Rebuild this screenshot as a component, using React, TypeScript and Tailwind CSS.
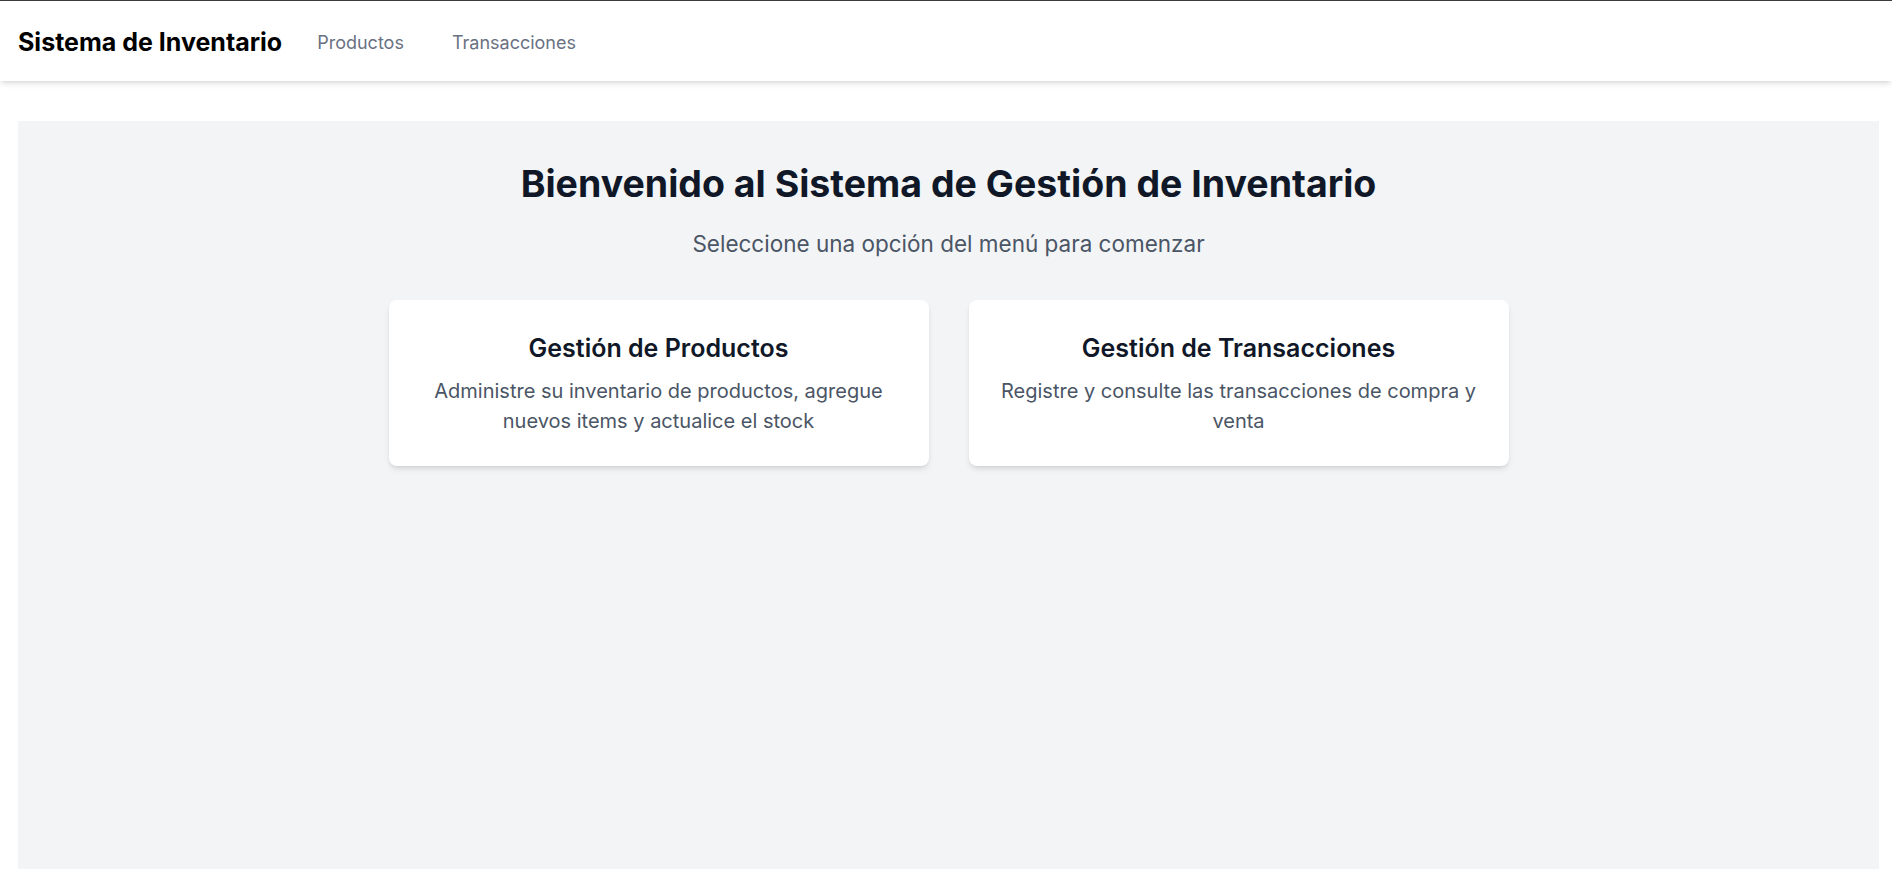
import React from 'react';

const cards = [
  {
    title: 'Gestión de Productos',
    text: 'Administre su inventario de productos, agregue nuevos items y actualice el stock',
  },
  {
    title: 'Gestión de Transacciones',
    text: 'Registre y consulte las transacciones de compra y venta',
  },
];

export default function App() {
  return (
    <div className="min-h-screen bg-white font-['Inter',sans-serif]">
      {/* Top Navigation */}
      <nav className="relative z-10 h-[81px] border-t border-[#3c3c3c] bg-white shadow-md">
        <div className="flex h-full items-center px-[18px] pt-[3px]">
          <span className="text-[25px] font-bold text-black">Sistema de Inventario</span>
          <div className="ml-[23px] flex items-center gap-6">
            <a href="#" className="px-3 py-2 text-lg text-gray-500 hover:text-gray-900">
              Productos
            </a>
            <a href="#" className="px-3 py-2 text-lg text-gray-500 hover:text-gray-900">
              Transacciones
            </a>
          </div>
        </div>
      </nav>

      {/* Main Content */}
      <main className="ml-[18px] mr-[13px] mt-10 min-h-screen bg-gray-100 pt-[43px]">
        <div className="mx-auto max-w-6xl px-4 text-center">
          <h1 className="text-[37.5px] font-bold leading-10 text-gray-900">
            Bienvenido al Sistema de Gestión de Inventario
          </h1>
          <p className="mt-6 text-[22.5px] leading-8 text-gray-600">
            Seleccione una opción del menú para comenzar
          </p>

          <div className="mt-10 grid grid-cols-2 gap-10">
            {cards.map((card) => (
              <div key={card.title} className="rounded-lg bg-white px-7 pb-[30px] pt-8 shadow-md">
                <h2 className="text-[25px] font-semibold leading-8 text-gray-900">{card.title}</h2>
                <p className="mt-3 text-xl leading-[30px] text-gray-600">{card.text}</p>
              </div>
            ))}
          </div>
        </div>
      </main>
    </div>
  );
}
